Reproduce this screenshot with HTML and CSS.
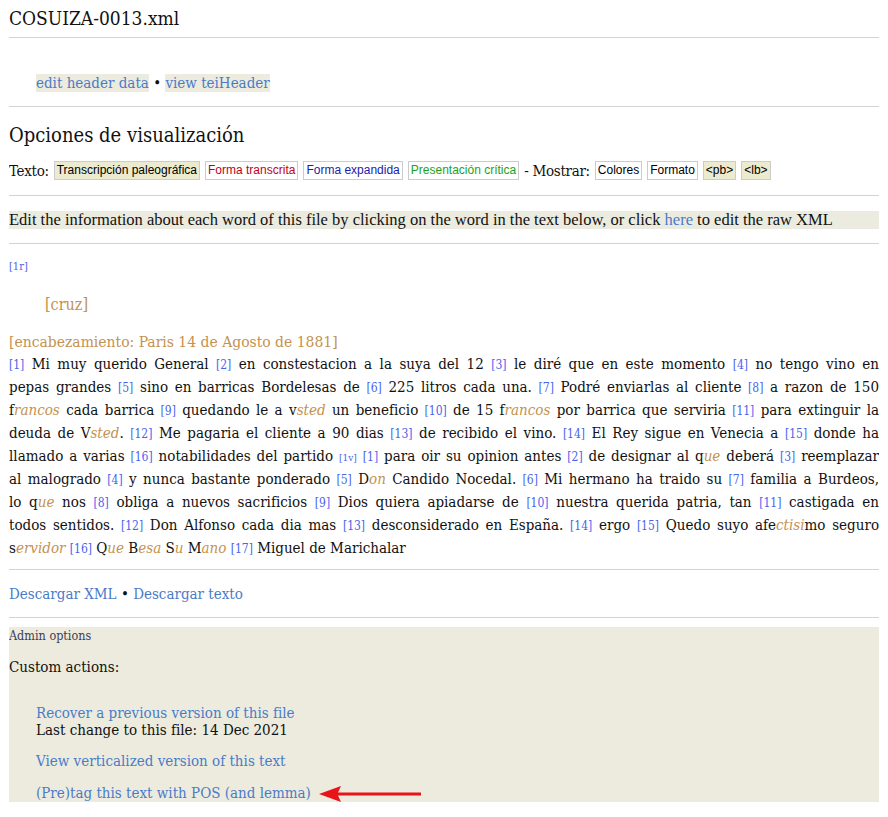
FILE: index.html
```html
<!DOCTYPE html>
<html lang="es">
<head>
<meta charset="utf-8">
<title>COSUIZA-0013.xml</title>
<link rel="stylesheet" href="styles.css">
</head>
<body>
<h1 class="title">COSUIZA-0013.xml</h1>
<hr class="rule">
<p class="hdr-links"><a class="hl" href="#">edit header data</a> &bull; <a class="hl" href="#">view teiHeader</a></p>
<hr class="rule">
<h2 class="sub">Opciones de visualización</h2>
<div class="opts">
  <span class="lbl">Texto:</span>
  <span class="btn sel">Transcripción paleográfica</span>
  <span class="btn red">Forma transcrita</span>
  <span class="btn blue">Forma expandida</span>
  <span class="btn green">Presentación crítica</span>
  <span class="lbl">- Mostrar:</span>
  <span class="btn">Colores</span>
  <span class="btn">Formato</span>
  <span class="btn sel">&lt;pb&gt;</span>
  <span class="btn sel">&lt;lb&gt;</span>
</div>
<hr class="rule">
<div class="edit-info">Edit the information about each word of this file by clicking on the word in the text below, or click <a href="#">here</a> to edit the raw XML</div>
<hr class="rule">
<div class="doc">
  <div class="pb">[1r]</div>
  <div class="cruz">[cruz]</div>
  <div class="head">[encabezamiento: Paris 14 de Agosto de 1881]</div>
  <div class="para">
    <div class="ln"><span class="n">[1]</span> Mi muy querido General <span class="n">[2]</span> en constestacion a la suya del 12 <span class="n">[3]</span> le diré que en este momento <span class="n">[4]</span> no tengo vino en</div>
    <div class="ln">pepas grandes <span class="n">[5]</span> sino en barricas Bordelesas de <span class="n">[6]</span> 225 litros cada una. <span class="n">[7]</span> Podré enviarlas al cliente <span class="n">[8]</span> a razon de 150</div>
    <div class="ln">f<i class="ex">rancos</i> cada barrica <span class="n">[9]</span> quedando le a v<i class="ex">sted</i> un beneficio <span class="n">[10]</span> de 15 f<i class="ex">rancos</i> por barrica que serviria <span class="n">[11]</span> para extinguir la</div>
    <div class="ln">deuda de V<i class="ex">sted</i>. <span class="n">[12]</span> Me pagaria el cliente a 90 dias <span class="n">[13]</span> de recibido el vino. <span class="n">[14]</span> El Rey sigue en Venecia a <span class="n">[15]</span> donde ha</div>
    <div class="ln">llamado a varias <span class="n">[16]</span> notabilidades del partido <span class="n sm">[1v]</span> <span class="n">[1]</span> para oir su opinion antes <span class="n">[2]</span> de designar al q<i class="ex">ue</i> deberá <span class="n">[3]</span> reemplazar</div>
    <div class="ln">al malogrado <span class="n">[4]</span> y nunca bastante ponderado <span class="n">[5]</span> D<i class="ex">on</i> Candido Nocedal. <span class="n">[6]</span> Mi hermano ha traido su <span class="n">[7]</span> familia a Burdeos,</div>
    <div class="ln">lo q<i class="ex">ue</i> nos <span class="n">[8]</span> obliga a nuevos sacrificios <span class="n">[9]</span> Dios quiera apiadarse de <span class="n">[10]</span> nuestra querida patria, tan <span class="n">[11]</span> castigada en</div>
    <div class="ln">todos sentidos. <span class="n">[12]</span> Don Alfonso cada dia mas <span class="n">[13]</span> desconsiderado en España. <span class="n">[14]</span> ergo <span class="n">[15]</span> Quedo suyo afe<i class="ex">ctisi</i>mo seguro</div>
    <div class="ln last">s<i class="ex">ervidor</i> <span class="n">[16]</span> Q<i class="ex">ue</i> B<i class="ex">esa</i> S<i class="ex">u</i> M<i class="ex">ano</i> <span class="n">[17]</span> Miguel de Marichalar</div>
  </div>
</div>
<hr class="rule">
<p class="dl"><a href="#">Descargar XML</a> &bull; <a href="#">Descargar texto</a></p>
<hr class="rule">
<div class="admin">
  <div class="admin-title">Admin options</div>
  <div class="custom">Custom actions:</div>
  <div class="actions">
    <div class="act"><a href="#">Recover a previous version of this file</a><br>Last change to this file: 14 Dec 2021</div>
    <div class="act"><a href="#">View verticalized version of this text</a></div>
    <div class="act"><a href="#">(Pre)tag this text with POS (and lemma)</a><svg class="arrow" width="102" height="16" viewBox="0 0 102 16" aria-hidden="true"><polygon points="0,8 22,0 19,6.5 19,9.5 22,16" fill="#e8141a"/><rect x="18" y="6.5" width="84" height="3" fill="#e8141a"/></svg></div>
  </div>
</div>
</body>
</html>
```
FILE: styles.css
```css
html, body {
  background: #ffffff;
}
body {
  margin: 0 9px 0 9px;
  font-family: "DejaVu Serif Condensed", "DejaVu Serif", serif;
  font-stretch: condensed;
  font-size: 15px;
  color: #111111;
}
a {
  color: #4a7bc8;
  text-decoration: none;
}
.title {
  font-weight: normal;
  font-size: 19px;
  margin: 0;
  padding-top: 6px;
  height: 31px;
  line-height: 24px;
}
.rule {
  border: 0;
  border-top: 1px solid #d3d3d3;
  margin: 0;
  height: 0;
}
.hdr-links {
  margin: 0;
  padding: 35px 0 0 27px;
  height: 33px;
  line-height: 20px;
}
.hl {
  background: #ecebdd;
}
.sub {
  font-weight: normal;
  font-size: 20px;
  margin: 0;
  padding-top: 16px;
  line-height: 24px;
  height: 31px;
}
.opts {
  display: flex;
  align-items: center;
  gap: 5px;
  height: 23px;
  margin-top: 5px;
  margin-bottom: 13px;
}
.lbl {
  font-size: 15px;
  letter-spacing: -0.3px;
}
.btn {
  font-family: "Liberation Sans", Arial, sans-serif;
  font-stretch: normal;
  font-size: 12px;
  line-height: 15px;
  padding: 1px 2px;
  border: 1px solid #cccccc;
  background: #ffffff;
  color: #000000;
}
.btn.sel { background: #ecebd0; }
.btn.red { color: #c0001a; }
.btn.blue { color: #1c1caa; }
.btn.green { color: #17a41d; }
.edit-info {
  margin: 15px 0 14px 0;
  background: #ecebdf;
  font-family: "Liberation Serif", serif;
  font-stretch: normal;
  font-size: 16.5px;
  line-height: 18px;
  padding: 0;
}
.doc {
  padding-top: 15px;
}
.pb {
  font-size: 11px;
  color: #5060e8;
  line-height: 16px;
}
.cruz {
  color: #c4924f;
  font-size: 16px;
  line-height: 22px;
  padding: 19px 0 0 36px;
}
.head {
  color: #c4924f;
  font-size: 15.5px;
  line-height: 22px;
  margin-top: 15px;
}
.para {
  line-height: 23px;
  margin-bottom: 9px;
}
.ln {
  text-align: justify;
  text-align-last: justify;
}
.ln.last {
  text-align-last: left;
}
.n {
  color: #4863ee;
  font-size: 12px;
  line-height: 1;
}
.n.sm {
  font-size: 10px;
}
.ex {
  color: #c4924f;
}
.dl {
  margin: 0;
  padding: 14px 0 0 0;
  height: 33px;
  line-height: 20px;
}
.admin {
  margin-top: 9px;
  background: #ecebde;
  height: 175px;
}
.admin-title {
  font-size: 12.5px;
  color: #3c3c58;
  line-height: 18px;
}
.custom {
  margin-top: 12px;
  line-height: 20px;
}
.actions {
  padding: 28px 0 0 27px;
}
.act {
  line-height: 17px;
  margin-bottom: 14px;
}
.act:last-child {
  margin-top: 15px;
}
.arrow {
  vertical-align: middle;
  margin-left: 8px;
}
```
